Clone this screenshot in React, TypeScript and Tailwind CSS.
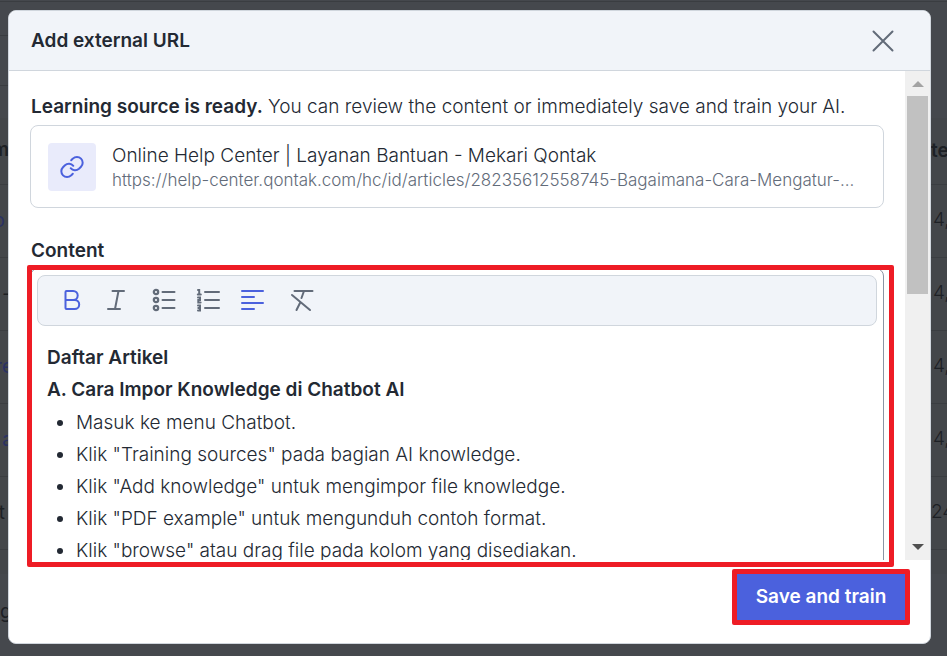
const leftCells = ["o", "–", "re", "a", "t"];
const rightCells = ["4,", "4,", "4,", "4,", "24"];

const articleSteps = [
  "Masuk ke menu Chatbot.",
  'Klik "Training sources" pada bagian AI knowledge.',
  'Klik "Add knowledge" untuk mengimpor file knowledge.',
  'Klik "PDF example" untuk mengunduh contoh format.',
  'Klik "browse" atau drag file pada kolom yang disediakan.',
];

function BackgroundPage() {
  return (
    <div className="absolute inset-0 overflow-hidden" aria-hidden="true">
      <div className="h-[2px] border-b border-[#3a3d41]" />
      <div className="h-[34px] w-2 border-b border-[#3a3d41]" />
      <div className="h-[50px] w-2 border-b border-[#3a3d41]" />
      <div className="h-8" />
      <table className="w-full table-fixed border-collapse bg-[#43464a] text-[19px] text-[#1d2025]">
        <thead>
          <tr className="h-[66px] border-b border-[#3a3d41]">
            <th className="relative w-[9px]">
              <span className="absolute right-0 top-[18px] font-semibold">m</span>
            </th>
            <th />
            <th className="w-4 text-left font-semibold">te</th>
          </tr>
        </thead>
        <tbody>
          {leftCells.map((cell, i) => (
            <tr key={i} className="h-[73px] border-b border-[#3a3d41]">
              <td className={`relative ${i === 1 || i === 4 ? "" : "text-[#2a3163]"}`}>
                <span className={`absolute top-[22px] ${i === 0 || i === 4 ? "right-1" : "-right-1"}`}>
                  {cell}
                </span>
              </td>
              <td />
              <td className={`font-light ${i === 4 ? "" : "pl-[2px]"}`}>{rightCells[i]}</td>
            </tr>
          ))}
        </tbody>
      </table>
      <div className="h-6 bg-[#43464a]" />
      <div className="mt-6 text-[19px] text-[#1d2025]">g</div>
    </div>
  );
}

function BoldIcon() {
  return (
    <svg width="18" height="22" viewBox="0 0 18 22" fill="none" stroke="#4b61dd" strokeWidth="2" strokeLinejoin="round">
      <path d="M3.500 2h6.700a4.400 4.400 0 0 1 0 9H2.500V3a1 1 0 0 1 1-1zM2.500 11h9.200a4.500 4.500 0 0 1 0 9H3.500a1 1 0 0 1-1-1z" />
    </svg>
  );
}

function ItalicIcon() {
  return (
    <svg width="18" height="22" viewBox="0 0 18 22" fill="none" stroke="#626b79" strokeWidth="2" strokeLinecap="round">
      <path d="M5.500 2H17M1 20h12M11.500 2L8 20" />
    </svg>
  );
}

function BulletListIcon() {
  return (
    <svg width="24" height="24" viewBox="0 0 24 24" fill="none" stroke="#626b79" strokeWidth="2" strokeLinecap="round">
      <g strokeWidth="2.2">
        <circle cx="4" cy="4" r="2.200" />
        <circle cx="4" cy="12" r="2.200" />
        <circle cx="4" cy="20" r="2.200" />
      </g>
      <path d="M10.500 4h12M10.500 12h12M10.500 20h12" />
    </svg>
  );
}

function NumberListIcon() {
  return (
    <svg width="24" height="24" viewBox="0 0 24 24" fill="none" stroke="#626b79" strokeWidth="2" strokeLinecap="round">
      <path d="M9 4h14M9 12h14M9 20h14" />
      <path
        d="M2 2h1.200V6.500M1.800 6.500h3M2 9.500H4V12H2.300v2.500H4.600M2 17.500H4V22.500H2M2.300 20H4"
        strokeWidth="2"
      />
    </svg>
  );
}

function AlignLeftIcon() {
  return (
    <svg width="24" height="22" viewBox="0 0 24 22" fill="none" stroke="#4b61dd" strokeWidth="2" strokeLinecap="round">
      <path d="M2 2h21M2 8h12M2 14h21M2 20h12" />
    </svg>
  );
}

function ClearFormatIcon() {
  return (
    <svg width="24" height="24" viewBox="0 0 24 24" fill="none" stroke="#626b79" strokeWidth="2" strokeLinecap="round">
      <path d="M4.500 3h18M14 3L11.500 10M10 15L6.500 22M2 7L20 22" />
    </svg>
  );
}

function LinkIcon() {
  return (
    <svg width="24" height="24" viewBox="0 0 24 24" fill="none" stroke="#4b61dd" strokeWidth="2" strokeLinecap="round">
      <path d="M11.200 5.200L12.900 3.600a5.700 5.700 0 0 1 8.100 8.100L19 13.700a5.700 5.700 0 0 1-8.300-.5" />
      <path d="M12.800 18.800L11.100 20.400a5.700 5.700 0 0 1-8.100-8.100L5 10.300a5.700 5.700 0 0 1 8.300.5" />
    </svg>
  );
}

function Toolbar() {
  return (
    <div className="flex h-[51px] items-center rounded-lg border border-[#d0d6dd] bg-[#f1f4f9] pb-px pl-3">
      <button type="button" aria-label="Bold" className="flex w-11 justify-center">
        <BoldIcon />
      </button>
      <button type="button" aria-label="Italic" className="flex w-11 justify-center">
        <ItalicIcon />
      </button>
      <button type="button" aria-label="Bulleted list" className="ml-1 flex w-11 justify-center">
        <BulletListIcon />
      </button>
      <button type="button" aria-label="Numbered list" className="flex w-11 justify-center">
        <NumberListIcon />
      </button>
      <button type="button" aria-label="Align left" className="flex w-11 justify-center">
        <AlignLeftIcon />
      </button>
      <button type="button" aria-label="Clear formatting" className="ml-[6px] flex w-11 justify-center">
        <ClearFormatIcon />
      </button>
    </div>
  );
}

function Scrollbar() {
  return (
    <div className="flex w-[25px] shrink-0 flex-col items-center bg-[#f0f0f0]">
      <div className="flex h-[25px] items-center">
        <svg width="12" height="6" viewBox="0 0 12 6" fill="#a3a3a3">
          <path d="M6 0l6 6H0z" />
        </svg>
      </div>
      <div className="h-[198px] w-[21px] bg-[#c1c1c1]" />
      <div className="mt-auto flex h-[26px] items-center">
        <svg width="12" height="6" viewBox="0 0 12 6" fill="#505050">
          <path d="M6 6L0 0h12z" />
        </svg>
      </div>
    </div>
  );
}

export default function App() {
  return (
    <div className="relative flex h-screen overflow-hidden bg-[#45484d] pb-3 pl-2 pr-4 pt-[10px] font-['Inter',sans-serif] text-[#232933]">
      <BackgroundPage />
      <div
        role="dialog"
        aria-labelledby="dialog-title"
        className="relative flex min-w-0 flex-1 flex-col rounded-lg border border-[#d0d6dd] bg-white"
      >
        <header className="flex h-[60px] shrink-0 items-center justify-between rounded-t-lg border-b border-[#d0d6dd] bg-[#f1f4f9] pl-[22px] pr-9">
          <h2 id="dialog-title" className="pt-px text-[19px] font-semibold">
            Add external URL
          </h2>
          <button type="button" aria-label="Close">
            <svg width="22" height="22" viewBox="0 0 22 22" fill="none" stroke="#626b79" strokeWidth="2" strokeLinecap="round">
              <path d="M1.500 1.500l19 19M20.500 1.500l-19 19" />
            </svg>
          </button>
        </header>

        <div className="flex min-h-0 flex-1">
          <div className="min-w-0 flex-1 overflow-hidden pl-[21px] pr-[21px] pt-5">
            <p className="whitespace-nowrap pl-px text-[19px] font-light leading-8">
              <strong className="font-semibold">Learning source is ready.</strong> You can review the
              content or immediately save and train your AI.
            </p>
            <div className="mt-[2px] flex h-[83px] items-center rounded-lg border border-[#d0d6dd] px-[17px]">
              <div className="flex size-12 shrink-0 items-center justify-center rounded bg-[#e9ebfb]">
                <LinkIcon />
              </div>
              <div className="ml-4 min-w-0 pt-[2px]">
                <p className="text-[19px] font-light leading-6">
                  Online Help Center | Layanan Bantuan - Mekari Qontak
                </p>
                <p className="whitespace-nowrap text-[17px] font-light leading-6 text-[#626b79]">
                  https://help-center.qontak.com/hc/id/articles/28235612558745-Bagaimana-Cara-Mengatur-...
                </p>
              </div>
            </div>

            <h3 className="mt-[27px] pl-px text-[19px] font-semibold leading-8">Content</h3>
            <div className="mt-px rounded-lg border border-[#8b95a5] px-[6px] pb-6 pt-[6px]">
              <Toolbar />
              <div className="px-[10px] pt-4 text-[19px] leading-8">
                <p className="font-semibold">Daftar Artikel</p>
                <p className="font-semibold">A. Cara Impor Knowledge di Chatbot AI</p>
                <ul className="mt-px list-disc pl-[29px] font-light">
                  {articleSteps.map((step) => (
                    <li key={step}>{step}</li>
                  ))}
                </ul>
              </div>
            </div>
          </div>
          <Scrollbar />
        </div>

        <footer className="flex h-[83px] shrink-0 items-start justify-end pr-5 pt-[9px]">
          <div className="rounded-xs border-5 border-[#ee1c25]">
            <button type="button" className="h-[46px] w-[168px] bg-[#4b61dd] text-[19px] font-semibold text-white">
              Save and train
            </button>
          </div>
        </footer>

        {/* highlight around the editor */}
        <div className="pointer-events-none absolute bottom-[76px] left-[18px] right-9 top-[254px] rounded-xs border-5 border-[#ee1c25]" />
      </div>
    </div>
  );
}
